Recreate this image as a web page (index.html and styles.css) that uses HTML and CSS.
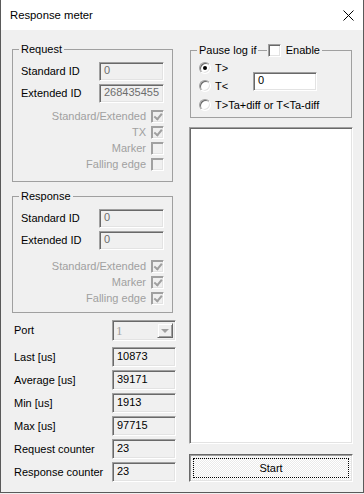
FILE: index.html
```html
<!DOCTYPE html>
<html lang="en">
<head>
    <meta charset="UTF-8">
    <meta name="viewport" content="width=device-width, initial-scale=1.0">
    <title>Response meter</title>
    <link rel="stylesheet" href="styles.css">
</head>
<body>
    <div class="window">
        <div class="titlebar">
            <span class="title">Response meter</span>
            <svg class="close" width="11" height="11" viewBox="0 0 11 11">
                <path d="M0.5 0.5L10.5 10.5M10.5 0.5L0.5 10.5" stroke="#000" stroke-width="1"/>
            </svg>
        </div>
        <div class="client">
            <div class="col">
                <fieldset class="group request">
                    <legend>Request</legend>
                    <div class="field"><span>Standard ID</span><span class="edit ro">0</span></div>
                    <div class="field"><span>Extended ID</span><span class="edit ro">268435455</span></div>
                    <div class="checks">
                        <div class="check"><span>Standard/Extended</span><span class="box on"></span></div>
                        <div class="check"><span>TX</span><span class="box on"></span></div>
                        <div class="check"><span>Marker</span><span class="box"></span></div>
                        <div class="check"><span>Falling edge</span><span class="box"></span></div>
                    </div>
                </fieldset>
                <fieldset class="group response">
                    <legend>Response</legend>
                    <div class="field"><span>Standard ID</span><span class="edit ro">0</span></div>
                    <div class="field"><span>Extended ID</span><span class="edit ro">0</span></div>
                    <div class="checks">
                        <div class="check"><span>Standard/Extended</span><span class="box on"></span></div>
                        <div class="check"><span>Marker</span><span class="box on"></span></div>
                        <div class="check"><span>Falling edge</span><span class="box on"></span></div>
                    </div>
                </fieldset>
                <div class="port">
                    <span>Port</span>
                    <span class="combo"><span class="combo-value">1</span><span class="combo-btn"></span></span>
                </div>
                <div class="stats">
                    <div class="stat"><span>Last [us]</span><span class="edit">10873</span></div>
                    <div class="stat"><span>Average [us]</span><span class="edit">39171</span></div>
                    <div class="stat"><span>Min [us]</span><span class="edit">1913</span></div>
                    <div class="stat"><span>Max [us]</span><span class="edit">97715</span></div>
                    <div class="stat"><span>Request counter</span><span class="edit">23</span></div>
                    <div class="stat"><span>Response counter</span><span class="edit">23</span></div>
                </div>
            </div>
            <div class="col">
                <fieldset class="group pause">
                    <legend>
                        <span>Pause log if</span>
                        <span class="rule"></span>
                        <span class="box white"></span>
                        <span class="enable">Enable</span>
                    </legend>
                    <div class="radio-top">
                        <div class="radios">
                            <div class="radio"><span class="dot on"></span><span>T&gt;</span></div>
                            <div class="radio"><span class="dot"></span><span>T&lt;</span></div>
                        </div>
                        <span class="edit white">0</span>
                    </div>
                    <div class="radio last"><span class="dot"></span><span>T&gt;Ta+diff or T&lt;Ta-diff</span></div>
                </fieldset>
                <div class="listbox"></div>
                <div class="button"><span class="focus">Start</span></div>
            </div>
        </div>
    </div>
</body>
</html>
```

FILE: styles.css
```css
body {
    margin: 0;
    background-color: #f0f0f0;
    font-family: "Liberation Sans", Arial, sans-serif;
    font-size: 11px;
    line-height: 13px;
    color: #000;
}
.window {
    width: 364px;
    height: 493px;
    box-sizing: border-box;
    border: 1px solid #5a5a5a;
    border-top: none;
    background-color: #f0f0f0;
}
.titlebar {
    height: 30px;
    background-color: #fff;
    display: flex;
    align-items: center;
    justify-content: space-between;
    padding: 0 9px 0 9px;
}
.title {
    font-size: 11.3px;
}
.client {
    display: flex;
    gap: 13px;
    padding: 13px 0 0 11px;
}
.col {
    width: 164px;
    display: flex;
    flex-direction: column;
}

/* group boxes */
.group {
    margin: 0;
    min-width: 0;
    border: 1px solid #a0a0a0;
    padding: 6px 8px 0 8px;
    width: 161px;
    box-sizing: border-box;
}
.group legend {
    padding: 0 2px;
    margin-left: -2px;
    line-height: 13px;
}
.request {
    padding-bottom: 9px;
}
.response {
    margin-top: 8px;
    padding-bottom: 6px;
}
.field {
    display: flex;
    justify-content: space-between;
    align-items: center;
    height: 19px;
}
.field + .field {
    margin-top: 3px;
}
.field .edit {
    width: 65px;
}
.checks {
    margin-top: 5px;
}
.response .checks {
    margin-top: 8px;
}
.check {
    height: 16px;
    display: flex;
    justify-content: flex-end;
    align-items: center;
    gap: 5px;
    color: #a0a0a0;
}

/* sunken controls */
.edit {
    box-sizing: border-box;
    height: 19px;
    padding: 0 4px;
    line-height: 15px;
    border: 1px solid;
    border-color: #a0a0a0 #fff #fff #a0a0a0;
    box-shadow: inset 1px 1px #696969, inset -1px -1px #e3e3e3;
    background-color: #f0f0f0;
}
.edit.ro {
    color: #6d6d6d;
}
.edit.white {
    background-color: #fff;
}
.box {
    width: 13px;
    height: 13px;
    box-sizing: border-box;
    border: 1px solid;
    border-color: #a0a0a0 #fff #fff #a0a0a0;
    box-shadow: inset 1px 1px #a0a0a0, inset -1px -1px #e3e3e3;
    background-color: #f0f0f0;
    position: relative;
}
.box.on::after {
    content: "";
    position: absolute;
    left: 2px;
    top: 1px;
    width: 3px;
    height: 6px;
    border: solid #a0a0a0;
    border-width: 0 2px 2px 0;
    transform: rotate(40deg);
    transform-origin: 60% 60%;
    margin-left: 1px;
}
.box.white {
    background-color: #fff;
    box-shadow: inset 1px 1px #696969, inset -1px -1px #e3e3e3;
}

/* port + stats */
.port {
    margin-top: 7px;
    display: flex;
    justify-content: space-between;
    align-items: center;
    padding-left: 2px;
}
.combo {
    width: 64px;
    height: 21px;
    box-sizing: border-box;
    display: flex;
    border: 1px solid;
    border-color: #a0a0a0 #fff #fff #a0a0a0;
    box-shadow: inset 1px 1px #696969, inset -1px -1px #e3e3e3;
    padding: 2px;
}
.combo-value {
    flex: 1;
    font-family: "Liberation Serif", serif;
    font-size: 13px;
    line-height: 15px;
    color: #a0a0a0;
    padding-left: 1px;
}
.combo-btn {
    width: 16px;
    box-sizing: border-box;
    border: 1px solid;
    border-color: #f0f0f0 #696969 #696969 #f0f0f0;
    box-shadow: inset 1px 1px #fff, inset -1px -1px #a0a0a0;
    display: flex;
    align-items: center;
    justify-content: center;
}
.combo-btn::after {
    content: "";
    border: 4px solid transparent;
    border-top: 4px solid #a0a0a0;
    border-bottom: none;
    margin-top: 1px;
}
.stats {
    margin-top: 6px;
    display: flex;
    flex-direction: column;
    gap: 3px;
}
.stat {
    display: flex;
    justify-content: space-between;
    align-items: center;
    padding-left: 2px;
}
.stat .edit {
    width: 64px;
    height: 20px;
    line-height: 16px;
}

/* pause group */
.pause {
    width: 162px;
    margin-left: 1px;
    padding: 2px 8px 3px 8px;
}
.pause legend {
    display: flex;
    align-items: center;
    width: 125px;
    height: 14px;
    box-sizing: border-box;
}
.rule {
    flex: 1;
    height: 1px;
    background-color: #a0a0a0;
    margin: 0 1px 0 2px;
}
.enable {
    margin-left: 5px;
}
.radio-top {
    display: flex;
}
.radios {
    width: 54px;
}
.radio-top .edit {
    width: 64px;
    margin-top: 13px;
}
.radio {
    height: 18px;
    display: flex;
    align-items: center;
    gap: 4px;
}
.radio.last {
    margin-top: 1px;
}
.dot {
    width: 12px;
    height: 12px;
    box-sizing: border-box;
    border-radius: 50%;
    border: 1px solid;
    border-color: #a0a0a0 #fff #fff #a0a0a0;
    box-shadow: inset 1px 1px #696969, inset -1px -1px #e3e3e3;
    background-color: #fff;
    display: flex;
    align-items: center;
    justify-content: center;
}
.dot.on::after {
    content: "";
    width: 4px;
    height: 4px;
    border-radius: 50%;
    background-color: #000;
}

/* log + button */
.listbox {
    margin-top: 9px;
    height: 317px;
    box-sizing: border-box;
    border: 1px solid;
    border-color: #a0a0a0 #fff #fff #a0a0a0;
    box-shadow: inset 1px 1px #696969, inset -1px -1px #e3e3e3;
    background-color: #fff;
}
.button {
    margin-top: 10px;
    height: 28px;
    box-sizing: border-box;
    border: 1px solid;
    border-color: #696969 #fff #fff #696969;
    box-shadow: inset 1px 1px #a0a0a0, inset -1px -1px #e3e3e3;
    background: repeating-conic-gradient(#fff 0 25%, #ebebeb 0 50%) 0 0 / 2px 2px;
    padding: 3px;
    display: flex;
}
.focus {
    flex: 1;
    border: 1px dotted #000;
    display: flex;
    align-items: center;
    justify-content: center;
}
```
